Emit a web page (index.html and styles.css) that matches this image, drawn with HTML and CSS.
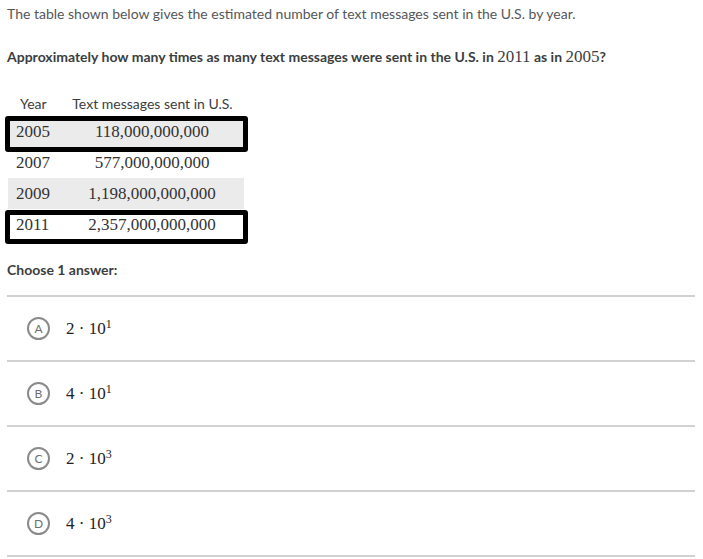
FILE: index.html
```html
<!DOCTYPE html>
<html>
<head>
<meta charset="utf-8">
<link rel="stylesheet" href="styles.css">
</head>
<body>
<div class="page">
  <p class="intro">The table shown below gives the estimated number of text messages sent in the U.S. by year.</p>
  <p class="question">Approximately how many times as many text messages were sent in the U.S. in <span class="math">2011</span> as in <span class="math">2005</span>?</p>
  <div class="table-wrap">
    <table class="data">
      <colgroup><col class="col-year"><col class="col-num"></colgroup>
      <thead>
        <tr><th class="c-year">Year</th><th class="c-num">Text messages sent in U.S.</th></tr>
      </thead>
      <tbody>
        <tr class="shade"><td class="c-year">2005</td><td class="c-num">118,000,000,000</td></tr>
        <tr><td class="c-year">2007</td><td class="c-num">577,000,000,000</td></tr>
        <tr class="shade"><td class="c-year">2009</td><td class="c-num">1,198,000,000,000</td></tr>
        <tr><td class="c-year">2011</td><td class="c-num">2,357,000,000,000</td></tr>
      </tbody>
    </table>
    <div class="mark mark-1"></div>
    <div class="mark mark-2"></div>
  </div>
  <p class="choose">Choose 1 answer:</p>
  <ul class="choices">
    <li class="choice"><span class="letter">A</span><span class="math ans">2 &middot; 10<sup>1</sup></span></li>
    <li class="choice"><span class="letter">B</span><span class="math ans">4 &middot; 10<sup>1</sup></span></li>
    <li class="choice"><span class="letter">C</span><span class="math ans">2 &middot; 10<sup>3</sup></span></li>
    <li class="choice"><span class="letter">D</span><span class="math ans">4 &middot; 10<sup>3</sup></span></li>
  </ul>
</div>
</body>
</html>
```
FILE: styles.css
```css
html, body {
  margin: 0;
  padding: 0;
  background: #ffffff;
}
.page {
  padding: 0 8px 0 7px;
  font-family: Lato, "Open Sans", sans-serif;
  font-size: 14px;
  color: #3b3e40;
}
.intro {
  margin: 0;
  padding-top: 5px;
  line-height: 18px;
  color: #555759;
}
.question {
  margin: 24px 0 0 0;
  line-height: 20px;
  font-weight: 700;
  color: #3b3e40;
}
.math {
  font-family: "Liberation Serif", "DejaVu Serif", serif;
  font-weight: 400;
  font-size: 17px;
}
.table-wrap {
  position: relative;
  margin-top: 23px;
}
.data {
  margin-left: 1px;
  border-collapse: collapse;
  table-layout: fixed;
  width: 236px;
  font-size: 14px;
}
.col-year { width: 55px; }
.col-num { width: 181px; }
.data th {
  font-weight: 400;
  color: #3b3e40;
  height: 26px;
  padding: 0;
  vertical-align: middle;
  white-space: nowrap;
}
.data th.c-year { text-align: left; padding-left: 12px; }
.data th.c-num { text-align: center; padding-right: 2px; }
.data td {
  font-family: "Liberation Serif", "DejaVu Serif", serif;
  font-size: 17px;
  color: #333;
  height: 31px;
  padding: 0;
  vertical-align: middle;
  white-space: nowrap;
}
.data td.c-year { padding-left: 8px; }
.data td.c-num { text-align: center; padding-right: 3px; }
.data tr.shade td { background: #ebebeb; }
.mark {
  position: absolute;
  left: -2px;
  width: 243px;
  box-sizing: border-box;
  border: 5px solid #000;
  border-radius: 3px;
}
.mark-1 { top: 26px; height: 36px; }
.mark-2 { top: 120px; height: 34px; }
.choose {
  margin: 21px 0 0 0;
  font-weight: 700;
  line-height: 18px;
  color: #3b3e40;
}
.choices {
  list-style: none;
  margin: 16px 0 0 0;
  padding: 0;
  width: 688px;
  border-top: 2px solid #d2d2d2;
}
.choice {
  display: flex;
  align-items: center;
  height: 63px;
  border-bottom: 2px solid #d2d2d2;
  padding-left: 20px;
}
.letter {
  box-sizing: border-box;
  width: 23px;
  height: 23px;
  border: 2px solid #8a8a8a;
  border-radius: 50%;
  display: flex;
  align-items: center;
  justify-content: center;
  font-size: 12px;
  color: #6f6f6f;
  font-family: Lato, sans-serif;
}
.ans {
  margin-left: 16px;
  font-size: 17px;
  color: #222;
}
.ans sup {
  font-size: 12px;
  vertical-align: 6px;
  line-height: 0;
}
```
